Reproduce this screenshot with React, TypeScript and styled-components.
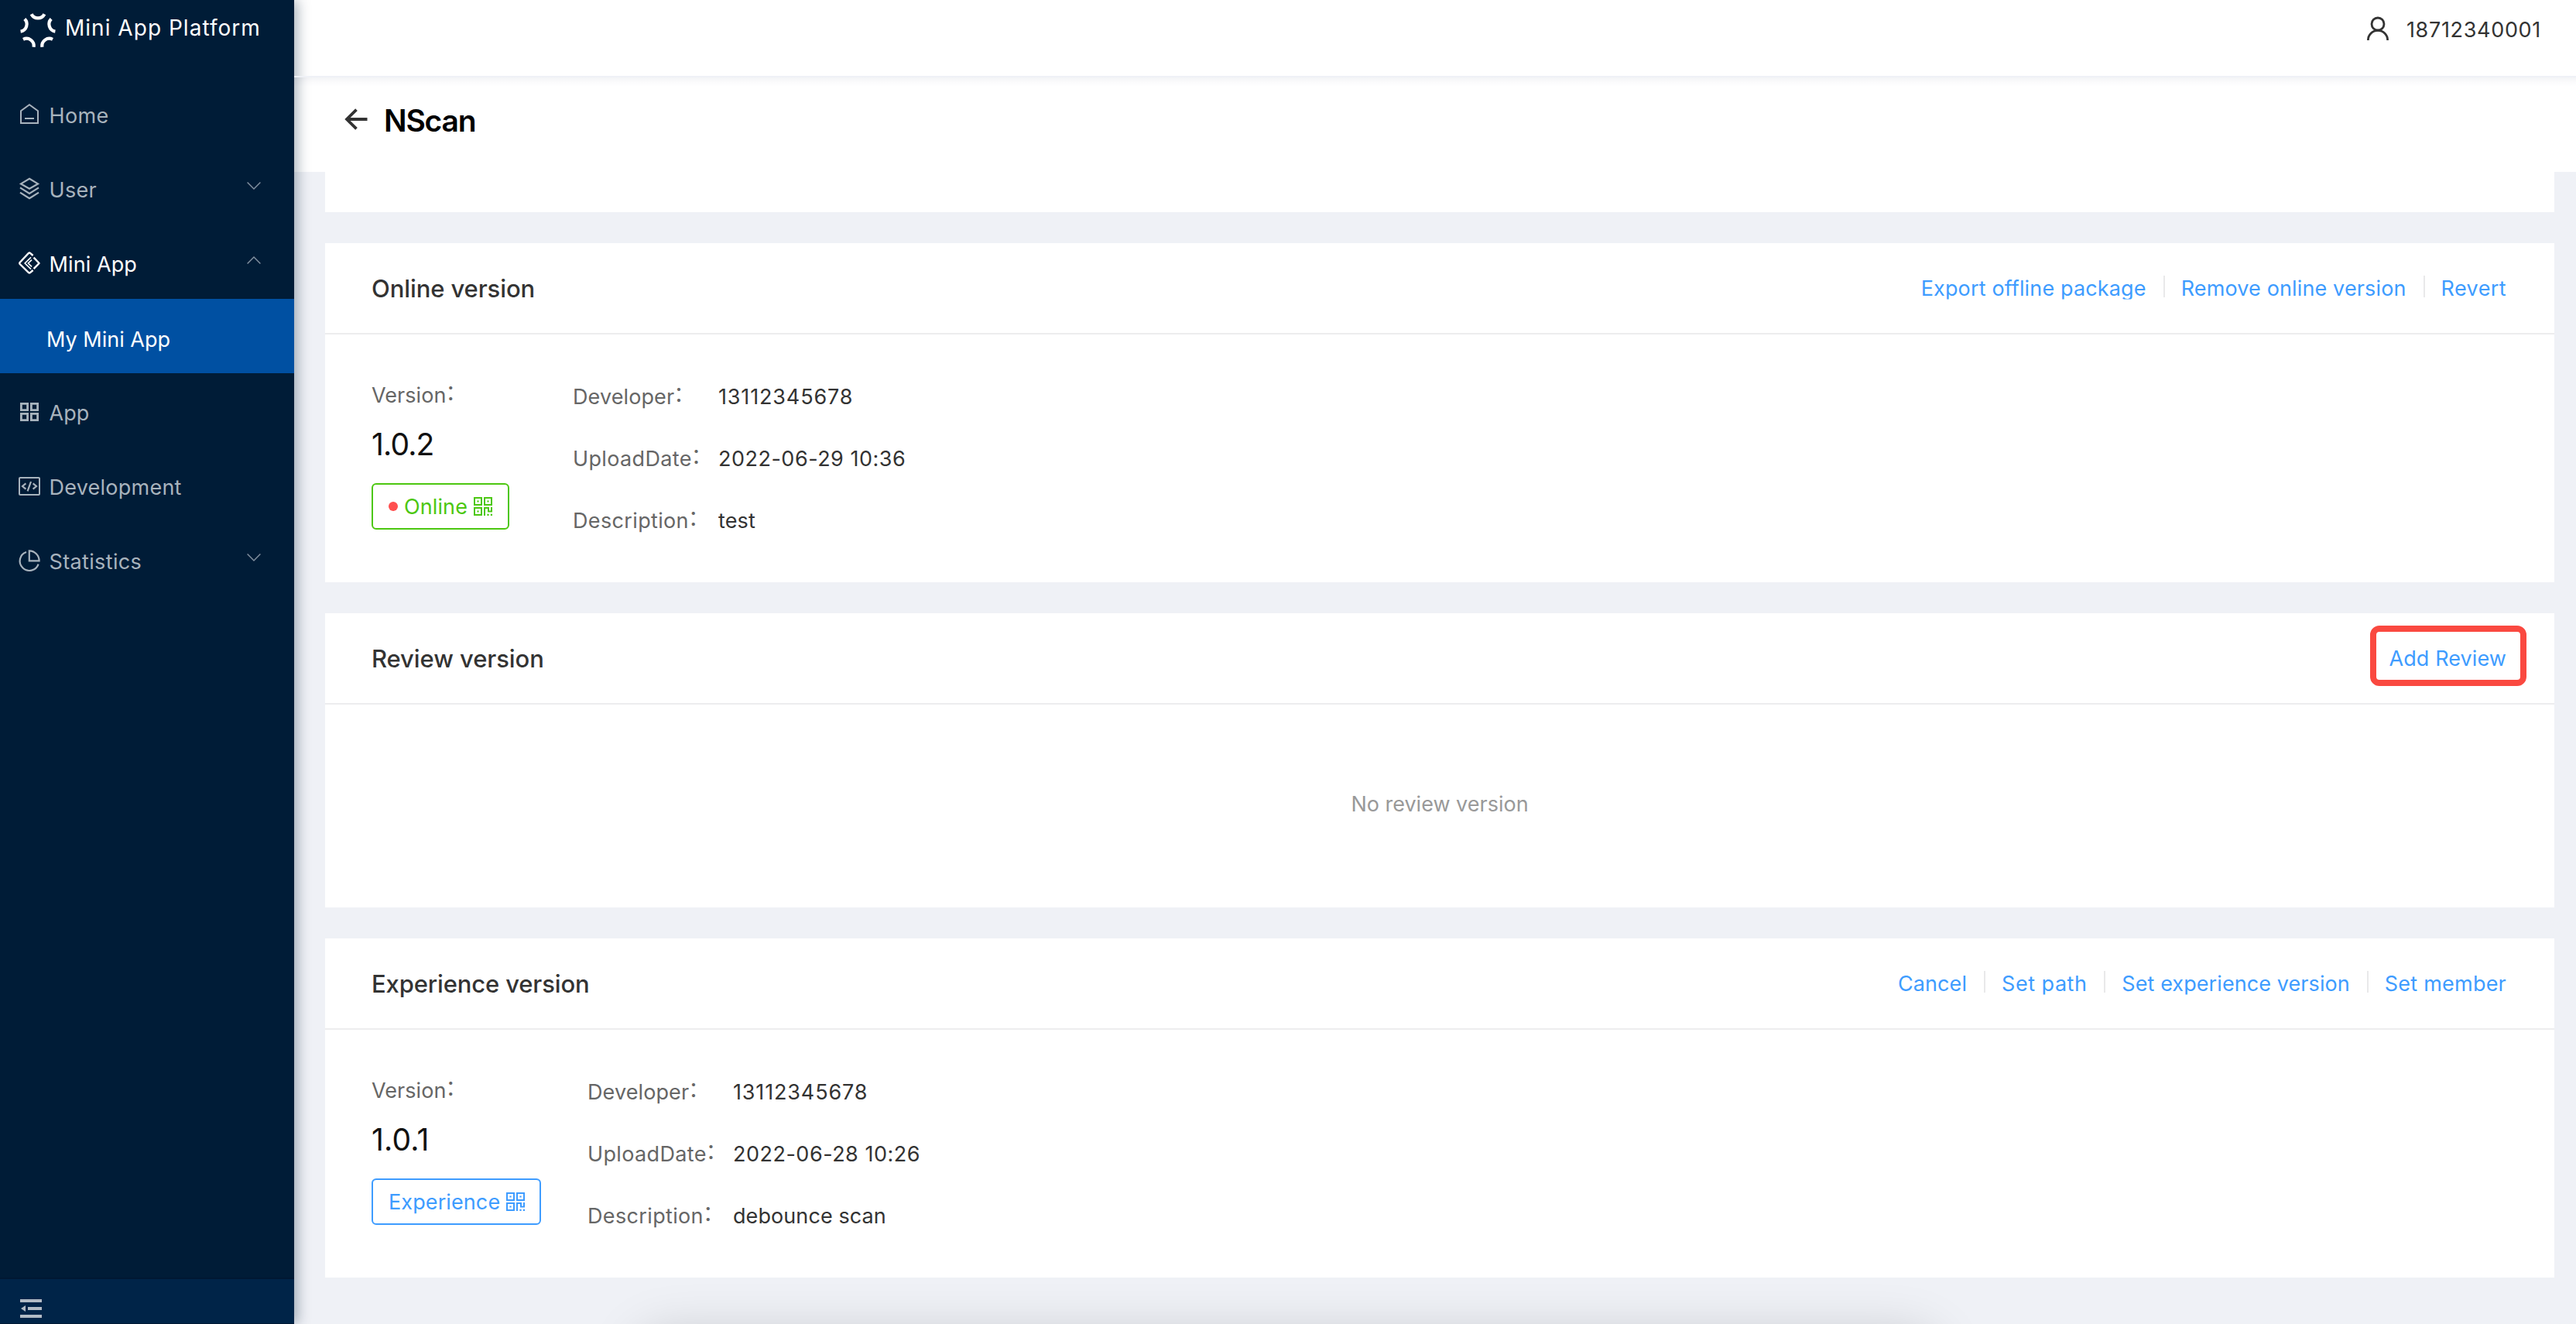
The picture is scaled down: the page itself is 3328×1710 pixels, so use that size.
import React from "react";
import styled, { createGlobalStyle } from "styled-components";

const GlobalStyle = createGlobalStyle`
  * { box-sizing: border-box; }
  body {
    margin: 0;
    background: #eff1f6;
    font-family: Inter, "Noto Sans CJK SC", sans-serif;
    font-size: 27px;
    color: #333;
  }
`;

const Page = styled.div`
  position: relative;
  display: flex;
  width: 100vw;
  height: 100vh;
  min-height: 1710px;
  overflow: hidden;
`;

/* Sidebar */

const Sidebar = styled.aside`
  position: relative;
  z-index: 2;
  flex: none;
  display: flex;
  flex-direction: column;
  width: 380px;
  background: #001c37;
  box-shadow: 4px 0 16px rgba(0, 28, 55, 0.35);
`;

const Brand = styled.div`
  flex: none;
  display: flex;
  align-items: flex-start;
  gap: 10px;
  height: 98px;
  padding: 13px 0 0 24px;
  color: #fff;
`;

const BrandName = styled.span`
  padding-top: 3px;
  font-size: 28px;
  line-height: 40px;
  letter-spacing: 1.02px;
  white-space: nowrap;
`;

const Menu = styled.nav`
  flex: 1;
  display: flex;
  flex-direction: column;
`;

const MenuItem = styled.a<{ $active?: boolean }>`
  display: flex;
  align-items: center;
  height: 96px;
  padding: 4px 43px 0 24px;
  color: ${(p) => (p.$active ? "#fff" : "#a8b3bd")};
`;

const SubItem = styled.a`
  display: flex;
  align-items: center;
  height: 96px;
  padding: 8px 0 0 60px;
  background: #0050a2;
  color: #fff;
`;

const MenuLabel = styled.span<{ $spacing?: number }>`
  flex: 1;
  margin-left: 11.5px;
  padding-top: 3px;
  letter-spacing: ${(p) => p.$spacing ?? 0}px;
  white-space: nowrap;
`;

const Arrow = styled.svg`
  margin-top: -9px;
  color: #8392a1;
`;

const SidebarFooter = styled.div`
  flex: none;
  height: 60px;
  padding: 26px 0 0 26px;
  border-top: 2px solid #001833;
  border-bottom: 1px solid #001833;
  background: #002448;
  color: #b2bbc5;
`;

const Icon = styled.svg`
  flex: none;
  display: block;
  overflow: visible;
`;

/* Main area */

const Main = styled.main`
  flex: 1;
  min-width: 0;
  display: flex;
  flex-direction: column;
`;

const TopBar = styled.header`
  position: relative;
  z-index: 1;
  flex: none;
  display: flex;
  justify-content: flex-end;
  align-items: flex-start;
  gap: 23px;
  height: 98px;
  padding: 22px 45px 0 0;
  background: #fff;
`;

const Phone = styled.span`
  padding-top: 1px;
  line-height: 32px;
  letter-spacing: 0.68px;
`;

const TopRule = styled.div`
  position: relative;
  z-index: 3;
  flex: none;
  height: 2px;
  background: #eff1f6;
`;

const PageHeader = styled.div`
  flex: none;
  display: flex;
  align-items: flex-start;
  gap: 21px;
  height: 122px;
  padding: 40px 0 0 66px;
  background: linear-gradient(#f3f4f6, #fbfbfc 6px, #fff 12px);
`;

const PageTitle = styled.h1`
  margin: 0;
  padding-top: 2px;
  font-size: 39px;
  line-height: 28px;
  font-weight: 600;
  letter-spacing: -1.2px;
  color: #000;
`;

const Content = styled.div`
  display: flex;
  flex-direction: column;
  gap: 40px;
  padding: 0 28px 0 40px;
`;

const Card = styled.section<{ $height: number }>`
  flex: none;
  display: flex;
  flex-direction: column;
  height: ${(p) => p.$height}px;
  background: #fff;
`;

const CardHeader = styled.div`
  flex: none;
  display: flex;
  align-items: center;
  justify-content: space-between;
  height: 118px;
  padding: 0 62px 0 60px;
  border-bottom: 2px solid #ededee;
`;

const CardTitle = styled.h2<{ $spacing: number }>`
  margin: 0;
  font-size: 31px;
  font-weight: 500;
  letter-spacing: ${(p) => p.$spacing}px;
`;

const Actions = styled.div`
  position: relative;
  display: flex;
  align-items: center;
  height: 34px;
`;

const Action = styled.a<{ $spacing: number }>`
  line-height: 34px;
  padding-top: 1px;
  clip-path: inset(0 0 3px);
  letter-spacing: ${(p) => p.$spacing}px;
  color: #3e9cff;
  white-space: nowrap;
`;

const Divider = styled.i`
  width: 2px;
  height: 28px;
  margin: -4px 21px 0 22px;
  background: #e9e9ea;
`;

const Highlight = styled.div`
  position: absolute;
  top: -25px;
  right: -26px;
  width: 202px;
  height: 78px;
  border: 8px solid #fa4940;
  border-radius: 12px;
`;

const CardBody = styled.div`
  display: flex;
  gap: 60px;
  padding: 40px 60px;
`;

const Summary = styled.div`
  display: flex;
  flex-direction: column;
  align-items: flex-start;
  min-width: 200px;
  padding-top: 16px;
`;

const Label = styled.span<{ $spacing: number }>`
  display: inline-flex;
  height: 44px;
  padding-top: 1px;
  line-height: 44px;
  letter-spacing: ${(p) => p.$spacing}px;
  color: #666;
`;

const Colon = styled.span`
  width: 28px;
  margin: -5px 0 0 -1px;
  font-family: "Noto Sans CJK SC", sans-serif;
  letter-spacing: 0;
`;

const VersionNumber = styled.div<{ $spacing: number }>`
  font-size: 39px;
  line-height: 84px;
  letter-spacing: ${(p) => p.$spacing}px;
  color: #111;
`;

const Tag = styled.div<{ $color: string; $width: number }>`
  display: flex;
  align-items: center;
  gap: 8px;
  width: ${(p) => p.$width}px;
  height: 60px;
  margin-top: 8px;
  padding: 0 20px;
  border: 2px solid ${(p) => p.$color};
  border-radius: 6px;
  color: ${(p) => p.$color};
`;

const TagText = styled.span`
  flex: 1;
  padding-top: 1px;
  line-height: 40px;
  white-space: nowrap;
  letter-spacing: 0.1px;
`;

const Dot = styled.i`
  width: 12px;
  height: 12px;
  border-radius: 50%;
  background: #ff4f4f;
`;

const Details = styled.dl`
  display: grid;
  grid-template-columns: 188px auto;
  grid-auto-rows: 80px;
  align-items: center;
  margin: 0;
`;

const Term = styled.dt`
  display: flex;
`;

const Value = styled.dd<{ $spacing: number }>`
  height: 44px;
  margin: 0;
  padding-top: 1px;
  line-height: 44px;
  letter-spacing: ${(p) => p.$spacing}px;
  white-space: nowrap;
`;

const Empty = styled.div`
  flex: 1;
  display: flex;
  align-items: center;
  justify-content: center;
  padding-bottom: 6px;
  color: #999;
`;

const BottomGlow = styled.div`
  position: absolute;
  top: 1722px;
  left: 822px;
  width: 1682px;
  height: 200px;
  border-radius: 40px;
  box-shadow: 0 0 66px rgba(0, 0, 0, 0.17);
`;

/* Icons */

const stroke = (width: number) => ({
  fill: "none",
  stroke: "currentColor",
  strokeWidth: width,
});

const LogoIcon = () => (
  <Icon width="50" height="50" viewBox="-25 -26 50 50" {...stroke(4.2)}>
    {[0, 72, 144, 216, 288].map((angle) => (
      <path key={angle} transform={`rotate(${angle})`} d="M-8.4-20.8A9.4 9.4 0 0 0 8.4-20.8" />
    ))}
  </Icon>
);

const MenuIcon = ({ width = 2.2, children }: { width?: number; children: React.ReactNode }) => (
  <Icon width="28" height="28" viewBox="0 0 28 28" {...stroke(width)}>
    {children}
  </Icon>
);

const HomeIcon = () => (
  <MenuIcon width={2}>
    <path d="M14 1.3L25 9.3V25H3V9.3ZM8 19H20" />
  </MenuIcon>
);

const LayersIcon = () => (
  <MenuIcon>
    <path d="M14 .8L25 7.4L14 13.8L3 7.4ZM2 12.4L14 20L26 12.4M2 18.6L14 26.3L26 18.6" />
  </MenuIcon>
);

const MiniAppIcon = () => (
  <MenuIcon width={2.4}>
    <path
      d="M18.6 4L15 .9Q14 0 13 .9L1.6 13Q.8 14 1.6 15L13 26.1Q14 27 15 26.1L18.6 23M19.6 6.6L26.6 14L19.6 21.2"
      strokeLinejoin="round"
    />
    <path d="M16 6.4L8.2 14L16 21.6M17 9.6L12.4 14L17 18.4" strokeWidth="1.7" />
  </MenuIcon>
);

const GridIcon = () => (
  <MenuIcon width={2.8}>
    <path d="M3.4 3.4h8.2v8.2H3.4ZM16.4 3.4h8.2v8.2H16.4ZM3.4 16.4h8.2v8.2H3.4ZM16.4 16.4h8.2v8.2H16.4Z" />
  </MenuIcon>
);

const CodeIcon = () => (
  <MenuIcon width={2}>
    <rect x="1" y="3" width="26" height="22" rx="1" />
    <path d="M9.4 10.4L5 14L9.4 17.6M18.6 10.4L23 14L18.6 17.6M16 8L11.6 20.4" strokeWidth="2.2" />
  </MenuIcon>
);

const PieIcon = () => (
  <MenuIcon width={2.2}>
    <path d="M10 3A12.3 12.3 0 1 0 25.6 18.6M13.8 1.4A13 13 0 0 1 26.6 14.4H13.8Z" />
  </MenuIcon>
);

const Chevron = ({ up }: { up?: boolean }) => (
  <Arrow width="18" height="10" viewBox="0 0 18 10" {...stroke(1.4)}>
    <path d={up ? "M.6 9.4L9 1L17.4 9.4" : "M.6 .6L9 9L17.4 .6"} />
  </Arrow>
);

const FoldIcon = () => (
  <Icon width="28" height="24" viewBox="0 0 28 24" fill="currentColor">
    <path d="M0 0H28V4H0ZM10 10H28V14H10ZM0 20H28V24H0ZM7 8V16L1 12Z" />
  </Icon>
);

const UserIcon = () => (
  <Icon width="28" height="30" viewBox="0 0 28 30" {...stroke(2.8)}>
    <circle cx="14" cy="9" r="8" />
    <path d="M1.4 30A12.6 12.6 0 0 1 26.6 30" />
  </Icon>
);

const BackIcon = () => (
  <Icon width="29" height="28" viewBox="0 0 29 28" {...stroke(3.8)}>
    <path d="M2 14H28.5M14.5 1.6L2 14L14.5 26.4" />
  </Icon>
);

const QrIcon = () => (
  <Icon width="24" height="24" viewBox="0 0 24 24" fill="currentColor">
    <path
      fillRule="evenodd"
      d="M0 0H11V11H0ZM2 2V9H9V2ZM4.4 4.4H6.6V6.6H4.4ZM13 0H24V11H13ZM15 2V9H22V2ZM17.4 4.4H19.6V6.6H17.4ZM0 13H11V24H0ZM2 15V22H9V15ZM4.4 17.4H6.6V19.6H4.4Z"
    />
    <path d="M13 13H20V17.5H22V13H24V19.5H18V15H15V24H13ZM17.4 21.8H19.6V24H17.4ZM21.8 21.8H24V24H21.8Z" />
  </Icon>
);

/* Data */

type Spaced = [text: string, spacing: number];

const versionTerms: Spaced[] = [
  ["Developer", 0.1],
  ["UploadDate", 0.35],
  ["Description", 0.35],
];

const onlineActions: Spaced[] = [
  ["Export offline package", 0.14],
  ["Remove online version", 0.14],
  ["Revert", 0.4],
];

const experienceActions: Spaced[] = [
  ["Cancel", 0.1],
  ["Set path", 0.5],
  ["Set experience version", 0.08],
  ["Set member", 0.22],
];

const ActionList = ({ items }: { items: Spaced[] }) => (
  <Actions>
    {items.map(([text, spacing], i) => (
      <React.Fragment key={text}>
        {i > 0 && <Divider />}
        <Action $spacing={spacing}>{text}</Action>
      </React.Fragment>
    ))}
  </Actions>
);

const VersionInfo = ({
  version,
  tag,
  values,
}: {
  version: Spaced;
  tag: React.ReactNode;
  values: Spaced[];
}) => (
  <CardBody>
    <Summary>
      <Label $spacing={0.05}>
        Version<Colon>：</Colon>
      </Label>
      <VersionNumber $spacing={version[1]}>{version[0]}</VersionNumber>
      {tag}
    </Summary>
    <Details>
      {versionTerms.map(([term, spacing], i) => (
        <React.Fragment key={term}>
          <Term>
            <Label $spacing={spacing}>
              {term}
              <Colon>：</Colon>
            </Label>
          </Term>
          <Value $spacing={values[i][1]}>{values[i][0]}</Value>
        </React.Fragment>
      ))}
    </Details>
  </CardBody>
);

export default function App() {
  return (
    <Page>
      <GlobalStyle />
      <Sidebar>
        <Brand>
          <LogoIcon />
          <BrandName>Mini App Platform</BrandName>
        </Brand>
        <Menu>
          <MenuItem>
            <HomeIcon />
            <MenuLabel $spacing={0.4}>Home</MenuLabel>
          </MenuItem>
          <MenuItem>
            <LayersIcon />
            <MenuLabel $spacing={0.3}>User</MenuLabel>
            <Chevron />
          </MenuItem>
          <MenuItem $active>
            <MiniAppIcon />
            <MenuLabel $spacing={0.1}>Mini App</MenuLabel>
            <Chevron up />
          </MenuItem>
          <SubItem>My Mini App</SubItem>
          <MenuItem>
            <GridIcon />
            <MenuLabel>App</MenuLabel>
          </MenuItem>
          <MenuItem>
            <CodeIcon />
            <MenuLabel $spacing={0.24}>Development</MenuLabel>
          </MenuItem>
          <MenuItem>
            <PieIcon />
            <MenuLabel $spacing={0.36}>Statistics</MenuLabel>
            <Chevron />
          </MenuItem>
        </Menu>
        <SidebarFooter>
          <FoldIcon />
        </SidebarFooter>
      </Sidebar>

      <Main>
        <TopBar>
          <UserIcon />
          <Phone>18712340001</Phone>
        </TopBar>
        <TopRule />
        <PageHeader>
          <BackIcon />
          <PageTitle>NScan</PageTitle>
        </PageHeader>

        <Content>
          <Card $height={52} />

          <Card $height={438}>
            <CardHeader>
              <CardTitle $spacing={-0.1}>Online version</CardTitle>
              <ActionList items={onlineActions} />
            </CardHeader>
            <VersionInfo
              version={["1.0.2", -0.86]}
              tag={
                <Tag $color="#4cc710" $width={178}>
                  <Dot />
                  <TagText>Online</TagText>
                  <QrIcon />
                </Tag>
              }
              values={[
                ["13112345678", 0.85],
                ["2022-06-29 10:36", 0.5],
                ["test", 0.15],
              ]}
            />
          </Card>

          <Card $height={380}>
            <CardHeader>
              <CardTitle $spacing={-0.08}>Review version</CardTitle>
              <Actions>
                <Action $spacing={0.1}>Add Review</Action>
                <Highlight />
              </Actions>
            </CardHeader>
            <Empty>No review version</Empty>
          </Card>

          <Card $height={438}>
            <CardHeader>
              <CardTitle $spacing={-0.14}>Experience version</CardTitle>
              <ActionList items={experienceActions} />
            </CardHeader>
            <VersionInfo
              version={["1.0.1", 0.2]}
              tag={
                <Tag $color="#3e9cff" $width={219}>
                  <TagText>Experience</TagText>
                  <QrIcon />
                </Tag>
              }
              values={[
                ["13112345678", 0.85],
                ["2022-06-28 10:26", 0.5],
                ["debounce scan", 0.08],
              ]}
            />
          </Card>
        </Content>
      </Main>
      <BottomGlow />
    </Page>
  );
}
